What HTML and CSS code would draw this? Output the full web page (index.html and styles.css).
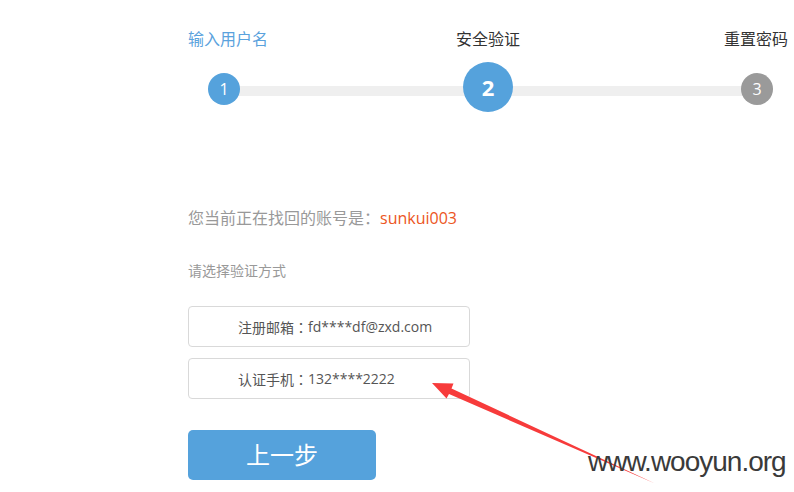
FILE: index.html
```html
<!DOCTYPE html>
<html lang="zh-CN">
<head>
<meta charset="utf-8">
<title>找回密码 - 安全验证</title>
<link rel="stylesheet" href="styles.css">
</head>
<body>
<div class="page">
  <div class="steps">
    <div class="step-labels">
      <span class="step-label done">输入用户名</span>
      <span class="step-label current">安全验证</span>
      <span class="step-label last">重置密码</span>
    </div>
    <div class="track">
      <span class="dot dot-1">1</span>
      <span class="dot dot-2">2</span>
      <span class="dot dot-3">3</span>
    </div>
  </div>

  <p class="account">您当前正在找回的账号是<span class="colon">：</span><span class="account-name">sunkui003</span></p>
  <p class="hint">请选择验证方式</p>

  <div class="options">
    <div class="option">注册邮箱<span class="colon">：</span>fd****df@zxd.com</div>
    <div class="option">认证手机<span class="colon">：</span>132****2222</div>
  </div>

  <button class="btn-prev" type="button">上一步</button>
</div>

<svg class="arrow" width="794" height="492" viewBox="0 0 794 492" aria-hidden="true">
  <polygon points="432,383 453.5,383.5 451.5,388.5 655,483.5 449,394 446.5,398.5" fill="#f73b3b"/>
</svg>
<div class="watermark">www.wooyun.org</div>
</body>
</html>
```

FILE: styles.css
```css
html, body {
  margin: 0;
  padding: 0;
  background: #fff;
}

body {
  width: 794px;
  height: 492px;
  overflow: hidden;
  position: relative;
  font-family: "Open Sans", "Noto Sans CJK SC", sans-serif;
  color: #333;
}

.page {
  padding: 29px 0 0 188px;
}

.steps {
  width: 600px;
}

.step-labels {
  display: grid;
  grid-template-columns: 1fr auto 1fr;
  font-size: 16px;
  line-height: 20px;
}

.step-label {
  color: #333;
  justify-self: center;
}

.step-label.done {
  color: #5aa2dd;
  justify-self: start;
}

.step-label.last {
  justify-self: end;
}

.colon {
  font-family: "Noto Sans CJK JP", sans-serif;
  line-height: 1;
}

.track {
  margin-top: 13px;
  height: 50px;
  display: flex;
  align-items: flex-start;
  background: linear-gradient(#efefef, #efefef) no-repeat;
  background-size: 533px 10px;
  background-position: 36px 24px;
}

.dot {
  display: flex;
  align-items: center;
  justify-content: center;
  border-radius: 50%;
  color: #fff;
  background: #55a2dc;
  width: 32px;
  height: 32px;
  font-size: 16px;
  line-height: 1;
  margin-top: 11px;
}

.dot-1 {
  margin-left: 20px;
}

.dot-2 {
  width: 50px;
  height: 50px;
  margin-top: 0;
  margin-left: 223px;
  font-size: 22px;
  font-weight: bold;
}

.dot-3 {
  margin-left: 228px;
  background: #9a9a9a;
}

.account {
  margin: 96px 0 0;
  height: 20px;
  font-size: 16px;
  line-height: 20px;
  color: #999;
}

.account-name {
  color: #ec5522;
}

.hint {
  margin: 33px 0 0;
  font-size: 14px;
  line-height: 20px;
  color: #999;
}

.options {
  margin-top: 25px;
  display: flex;
  flex-direction: column;
  gap: 11px;
}

.option {
  box-sizing: border-box;
  width: 282px;
  height: 41px;
  border: 1px solid #d9d9d9;
  border-radius: 4px;
  padding-left: 49px;
  display: flex;
  align-items: center;
  font-size: 14px;
  color: #555;
}

.btn-prev {
  display: block;
  margin-top: 31px;
  width: 188px;
  height: 50px;
  border: 0;
  border-radius: 5px;
  background: #55a2dc;
  color: #fff;
  font-family: "Open Sans", "Noto Sans CJK SC", sans-serif;
  font-size: 24px;
  line-height: 50px;
  padding: 0;
}

.arrow {
  position: absolute;
  left: 0;
  top: 0;
  pointer-events: none;
}

.watermark {
  position: absolute;
  left: 588px;
  top: 448px;
  font-family: "Liberation Sans", Arial, sans-serif;
  font-size: 28px;
  line-height: 28px;
  letter-spacing: -1px;
  color: #3a3a3a;
}
```
